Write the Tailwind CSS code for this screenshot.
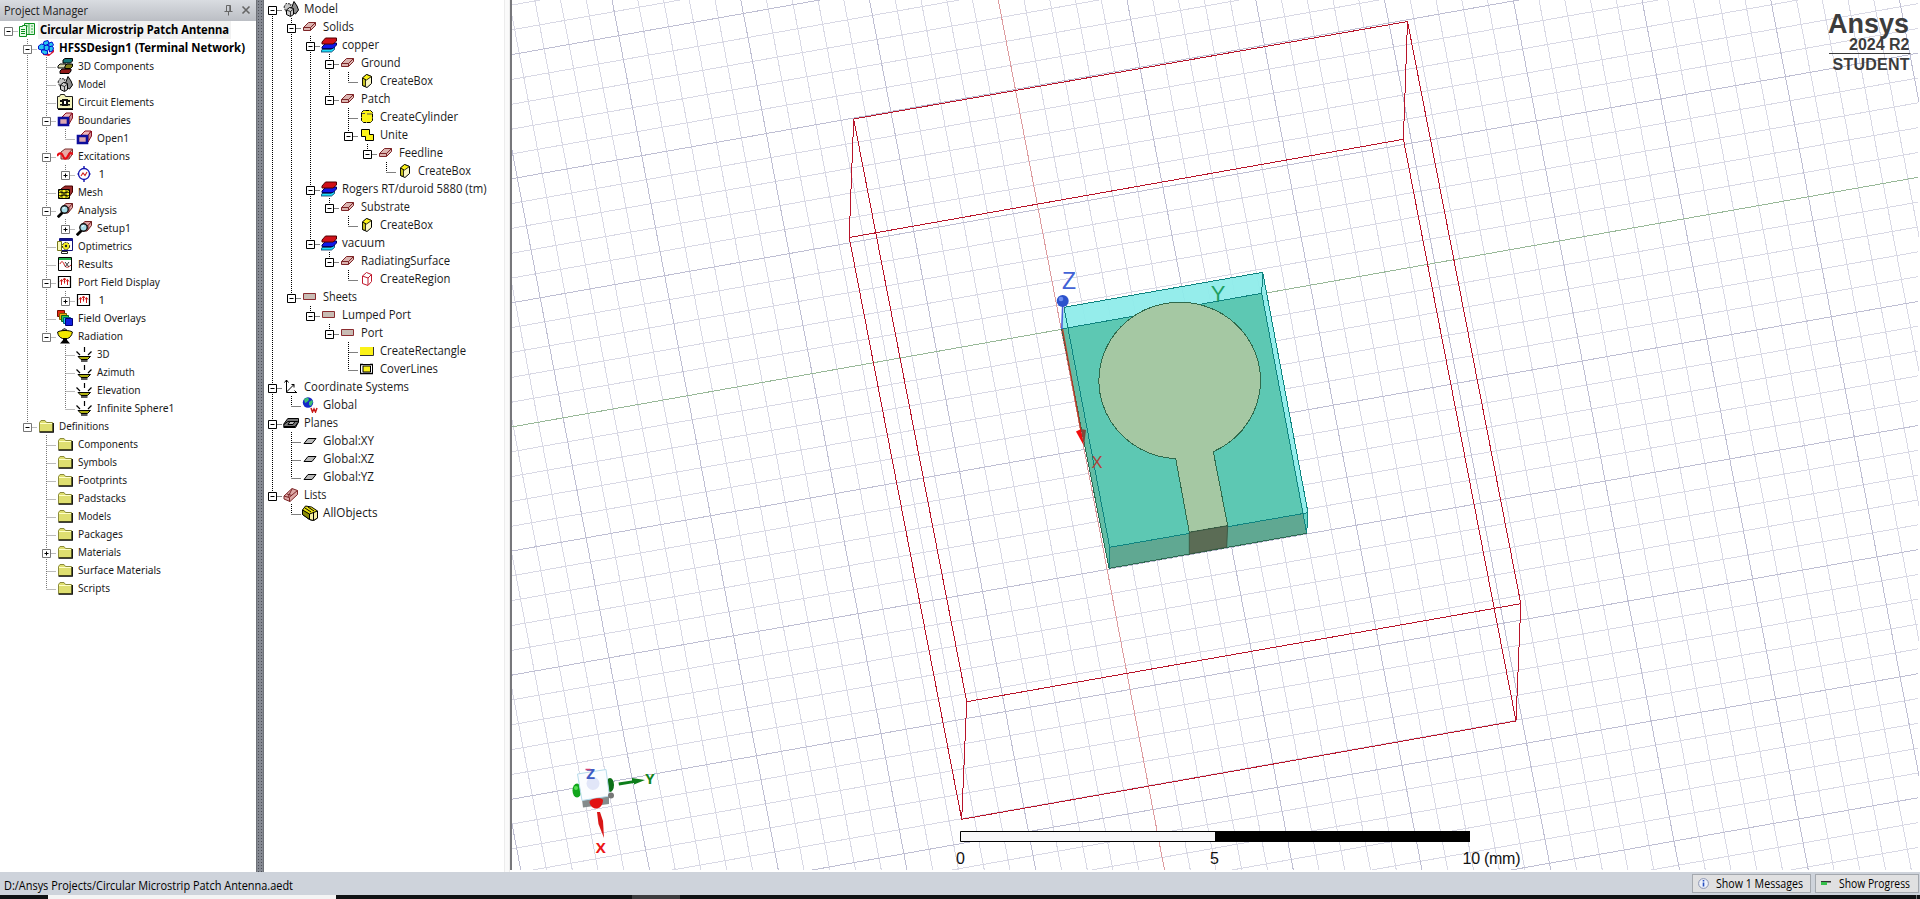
<!DOCTYPE html>
<html lang="en">
<head>
<meta charset="utf-8">
<title>Circular Microstrip Patch Antenna</title>
<script src="https://cdn.jsdelivr.net/npm/@tailwindcss/browser@4"></script>
</head>
<body class="w-[1920px] h-[899px] overflow-hidden bg-[#ced3db] text-black flex flex-col font-['Open_Sans','Noto_Sans',sans-serif]">

<!-- icon library, 16x16 each -->
<svg class="hidden" xmlns="http://www.w3.org/2000/svg">
  <symbol id="project" viewBox="0 0 16 16"><path d="M5.500 1.500h10v11h-10z" fill="#dff5df" stroke="#0a8f1e"/><path d="M10 2v10M7 4h2M12 4h2M12 7h2M12 10h2" stroke="#35b545" /><path d="M.5 4.500h3v-1h4v11h-7z" fill="#e8fbe8" stroke="#0a8f1e"/><path d="M2 7.500h4M2 9.500h4M2 11.500h4" stroke="#0a8f1e"/></symbol>
  <symbol id="hfss" viewBox="0 0 16 16"><path d="M5 13l7 1 4-5v3l-5 4-6-1z" fill="#d01030"/><g fill="#28c8f0" stroke="#0010d0"><path d="M6 1.500l4-1 1 3-3 2-3-1z"/><path d="M11 3l3-1 1.500 3-2 2-3-1z"/><path d="M.5 6l3-2 3 1v4l-3 1-3-1z"/><path d="M6 6l3-1 2.500 2-1 3-4 1z"/><path d="M11 7l3-1 1.500 2-1 3-3 1z"/><path d="M3.500 10l3 0 3 1v3l-3 .5-3-2z"/></g></symbol>
  <symbol id="comp3d" viewBox="0 0 16 16"><path d="M6 2l2-1.500h7.500V3l-2 2H6z" fill="#177878" stroke="#000"/><path d="M1 8l2-2h6l-1 4H1z" fill="#d8d8b0" stroke="#000"/><path d="M8 8l2-2h5.500v2.500l-2 2H8z" fill="#80801a" stroke="#000"/><path d="M3 13l2-2h9v2l-2 2.500H3z" fill="#901818" stroke="#000"/></symbol>
  <symbol id="model" viewBox="0 0 16 16"><path d="M1 6l2-3.500 5 .5-1 6-4 2z" fill="#c6c6c6" stroke="#222" stroke-dasharray="2 1"/><path d="M8.500 7L11 .5 14 5l1.500 4-3 4-3-2z" fill="#8c8c8c" stroke="#000"/><path d="M3.500 9l3-2.500 4 1v6l-3 2-4-2z" fill="#cdcdcd" stroke="#000"/><path d="M3.500 9l4 1.500 3-2.500M7.500 10v5" fill="none" stroke="#333"/></symbol>
  <symbol id="circuit" viewBox="0 0 16 16"><path d="M.5 14.500v-12h2l1-2h4l1 2h7v12z" fill="#f5f5bd" stroke="#222"/><path d="M1 15.500h15V3" fill="none" stroke="#000"/><path d="M5 5h6v7H5zM3 6h2v2H3zM3 10h2v1.500H3zM11 6h2v2h-2zM11 10h2v1.500h-2z" fill="#111"/><path d="M7 7h2v3H7z" fill="#fff"/></symbol>
  <symbol id="bound" viewBox="0 0 16 16"><path d="M5 5l4-4h6l-3 5z" fill="#efb6b8" stroke="#8a1020"/><path d="M12 12l3.500-6V1L12 5z" fill="#c98a90" stroke="#8a1020"/><path d="M2 6h9v7H2z" fill="#dca7b0" stroke="#0d0d9c" stroke-width="2.600"/></symbol>
  <symbol id="excite" viewBox="0 0 16 16"><path d="M4 4l4-3h7.500v5L12 11H4z" fill="#e7aaa6" stroke="#7a3030"/><path d="M12 10V5l3.500-4" fill="none" stroke="#7a3030"/><path d="M0 8c2-4 5-3 6 0s3 4 5 0 3-3 5-2" fill="none" stroke="#e80c14" stroke-width="2.200"/></symbol>
  <symbol id="port" viewBox="0 0 16 16"><circle cx="8" cy="8" r="5.500" fill="#fff" stroke="#1111b0" stroke-width="1.300"/><path d="M8 0v2.500M8 13.500V16M1.500 8h1M13.500 8h1" stroke="#1111b0" stroke-width="1.400"/><path d="M5 10l2-3 2 2.500 2-3.500" fill="none" stroke="#d02020" stroke-width="1.100"/></symbol>
  <symbol id="mesh" viewBox="0 0 16 16"><path d="M4 5l4-3h7.500v6L12 13z" fill="#9a2a2a" stroke="#400"/><path d="M1.500 5.500h11v9h-11z" fill="#f5ef20" stroke="#000"/><path d="M5 5v10M9 5v10M1 8.500h12M1 11.500h12M2 6l10 8M12 6L2 14" stroke="#000" stroke-width=".7"/></symbol>
  <symbol id="analysis" viewBox="0 0 16 16"><path d="M5 5l4-3.500h6.500v4L11 11H5z" fill="#dda3a3" stroke="#702020"/><path d="M10.500 5.500h1.500l3.500-4M12 5.500v4" fill="none" stroke="#702020"/><path d="M5.500 10.500L.8 15.200" stroke="#000" stroke-width="2.800"/><circle cx="7.500" cy="7.500" r="3.700" fill="#a8dde9" stroke="#111" stroke-width="1.400"/><path d="M6 6.500l2-1" stroke="#fff"/></symbol>
  <symbol id="opti" viewBox="0 0 16 16"><path d="M2.500.5h13v12h-13z" fill="#fff" stroke="#101078"/><path d="M2 1h14v2H2z" fill="#101090"/><path d="M.5 3.500h4v9h-4z" fill="#fafabc" stroke="#77771a"/><path d="M4.500 13.500h6v2h-6z" fill="#fff" stroke="#222"/><circle cx="9" cy="8" r="3.600" fill="#f8ee20" stroke="#222" stroke-dasharray="2 1"/><circle cx="9" cy="8" r="1.200" fill="#222"/></symbol>
  <symbol id="results" viewBox="0 0 16 16"><path d="M1.500 1.500h13v13h-13z" fill="#fff" stroke="#000"/><path d="M2 2h12v2H2z" fill="#23b14d"/><path d="M3 8c1-3 3-3 4 0s3 5 7 1" fill="none" stroke="#d02020"/><path d="M8 6l4 5M12 6l-4 5" stroke="#222" stroke-width=".9"/></symbol>
  <symbol id="pfd" viewBox="0 0 16 16"><path d="M1.500 2.500h12v11h-12z" fill="#fff" stroke="#000" stroke-width="1.200"/><path d="M4.500 6v5M7.500 4.500v5M10.500 6v5M3 7.500l1.500-2 1.500 2M6 6l1.500-2L9 6M9 7.500l1.500-2 1.500 2" fill="none" stroke="#d01818"/></symbol>
  <symbol id="overlays" viewBox="0 0 16 16"><path d="M.5.500h7v6h-7z" fill="#e82a10" stroke="#701000"/><path d="M2.500 3.500h7v6h-7z" fill="#f0b010" stroke="#806000"/><path d="M4.500 5.500h7v6h-7z" fill="#30d040" stroke="#106020"/><path d="M6.500 7.500h7v6h-7z" fill="#20d0e8" stroke="#006080"/><path d="M8.500 8.500h7v7h-7z" fill="#1020e0" stroke="#000070"/></symbol>
  <symbol id="radiation" viewBox="0 0 16 16"><path d="M5 2l2.500-1.500L10 2v1H5z" fill="#888" stroke="#000" stroke-width=".7"/><path d="M.6 4c3-2 12-2 14.800 0-.5 4-3 6-5 6.500H5.500C3 9.500 1 8 .6 4z" fill="#f3e800" stroke="#000"/><path d="M6 10h4v2l3 3.500H3L6 12z" fill="#000"/></symbol>
  <symbol id="pattern" viewBox="0 0 16 16"><path d="M8.500 1v5M.5 5.500L4 9M15.500 5.500L12 9" stroke="#000" stroke-width="1.200"/><path d="M2 10.500h12.500l-3 3H5z" fill="#b0b010" stroke="#000"/><path d="M5 15h6.500" stroke="#000" stroke-width="1.300"/></symbol>
  <symbol id="folder" viewBox="0 0 16 16"><path d="M1.500 13.500V4.500l1.500-2h4l1.500 2h6v9z" fill="#dfdf70" stroke="#8c8c3a"/><path d="M2 5.500h12" stroke="#ffffc8"/><path d="M1.500 14.200h13.800V5" fill="none" stroke="#000" stroke-width="1.200"/></symbol>
  <symbol id="solid" viewBox="0 0 16 16"><path d="M1.500 8.500l5-5h7v3l-5 5h-7z" fill="#dcb4b0" stroke="#7c2426"/><path d="M1.500 8.500h7l5-5M8.500 8.500v3" fill="none" stroke="#7c2426"/></symbol>
  <symbol id="material" viewBox="0 0 16 16"><path d="M1 12.500h9l3.500-2.500v2.500l-3 2.500H0z" fill="#20e0f8" stroke="#003060" stroke-width=".8"/><path d="M1 10l4-4h10.500v2L12 11.500H1z" fill="#1018e8" stroke="#000060"/><path d="M1 5l3.500-4h11v3L12 7H1z" fill="#d01018" stroke="#500000"/></symbol>
  <symbol id="box" viewBox="0 0 16 16"><path d="M3.500 5l4-3.500 5 2v7l-4.500 4-4.500-2z" fill="#fbf8c4" stroke="#000"/><path d="M3.500 5l3 1.500v7l-3-1z" fill="#c8c420" stroke="#000" stroke-width=".8"/><path d="M3.500 5l4-3.500 5 2L7.500 7z" fill="#fbf218" stroke="#000" stroke-width=".8"/></symbol>
  <symbol id="cyl" viewBox="0 0 16 16"><path d="M2.500 3.500l2-2h7l2 2v8l-2 2h-7l-2-2z" fill="#fbf218" stroke="#000" stroke-dasharray="4 .6"/><path d="M3 4.500h3M8 5h5" stroke="#555"/></symbol>
  <symbol id="unite" viewBox="0 0 16 16"><path d="M2.500 2.500h8v5h4v6h-8v-4h-4z" fill="#fbf218" stroke="#000"/></symbol>
  <symbol id="region" viewBox="0 0 16 16"><path d="M3.500 5l4-3.500 5 2v7l-3.500 4-5.500-2zM3.500 5L9 7l3.500-3.500M9 7v7" fill="none" stroke="#c0182c" /></symbol>
  <symbol id="sheet" viewBox="0 0 16 16"><path d="M1.500 4.500h12v6h-12z" fill="#c8bcb4" stroke="#8a2c30"/></symbol>
  <symbol id="rect" viewBox="0 0 16 16"><path d="M1 4h13v8H1z" fill="#fbf218"/><path d="M1 12.500h13.500V4" fill="none" stroke="#333"/></symbol>
  <symbol id="cover" viewBox="0 0 16 16"><path d="M1.500 3.500h12v9h-12z" fill="#fff" stroke="#000"/><path d="M4 5h7.500v6H4z" fill="#fbf218" stroke="#000"/><path d="M1 3.500h3M11 3.500h3M1 12.500h13" stroke="#000" stroke-width="1.500"/></symbol>
  <symbol id="coord" viewBox="0 0 16 16"><path d="M3.500 1v12.500H14M3.500 13L11 5.500M1.500 3.500l2-2.500 2 2.500M11.500 11.500l2 2M8.500 5.500h2.500v3" fill="none" stroke="#000"/></symbol>
  <symbol id="globe" viewBox="0 0 16 16"><circle cx="6" cy="5.500" r="5.200" fill="#1428c8"/><path d="M2 2l4-1.500L7 3 5 5 3 6zM7 5l3-2 1 2-2 4-2-1z" fill="#38c070"/><path d="M9 11l1.500 4 1.500-3 1.500 3 1.500-4" fill="none" stroke="#c81818" stroke-width="1.500"/></symbol>
  <symbol id="planes" viewBox="0 0 16 16"><path d="M.8 12.500V9l4-5.500h10.700V7l-3 5.500z" fill="#777" stroke="#000"/><path d="M.8 9.500l4-3h10M1 11.500h11l3-4" fill="none" stroke="#000"/><path d="M5 9.500l2-3h5l-2 3z" fill="#bbb" stroke="#000"/></symbol>
  <symbol id="plane" viewBox="0 0 16 16"><path d="M2 10.500l4-5h8l-4 5z" fill="#bbb" stroke="#000"/></symbol>
  <symbol id="lists" viewBox="0 0 16 16"><path d="M1 9l8-7.500 5.500 2v4L7 14.500 1 12z" fill="#dda8a6" stroke="#7c2426"/><path d="M1 9l5 1.500L14.500 3.500M6.500 10.500v4M4 7l5 1.500M9 2l-4 8" fill="none" stroke="#7c2426"/></symbol>
  <symbol id="all" viewBox="0 0 16 16"><path d="M.5 5l3-4 6 1 6 4v7l-4 2.500-4-1-7-5z" fill="#e8e010" stroke="#000"/><path d="M.5 5l7 4v5.500l-7-5z" fill="#8c8c08" stroke="#000"/><path d="M7.500 9l8-3v7l-4 2.500-4-1z" fill="#f6f0a0" stroke="#000"/><path d="M3 3l6 4M6 2l6 4M11.500 8v7" stroke="#000"/></symbol>
</svg>

<main class="flex h-[872px] w-full shrink-0">
  <!-- Project Manager -->
  <section class="flex w-[256px] shrink-0 flex-col bg-white">
    <header class="flex h-[21px] shrink-0 items-center bg-gradient-to-b from-[#d9dce1] to-[#bbbec4] pl-[4px] pr-[5px] pb-[2px]">
      <div class="grow"><svg class="h-[18px] w-[90px] overflow-visible text-[12px]" fill="#222"><text x="0" y="13.500" textLength="84" lengthAdjust="spacingAndGlyphs">Project Manager</text></svg></div>
      <svg class="mr-[8px] h-[12px] w-[9px]" viewBox="0 0 9 12" fill="none" stroke="#666"><path d="M2.500 7V1.500h4V7M5.800 1.500V7M.5 7.500h8M4.500 8v3.500"/></svg>
      <svg class="h-[10px] w-[10px]" viewBox="0 0 10 10" stroke="#666" stroke-width="1.600"><path d="M1.500 1.500l7 7M8.500 1.500l-7 7"/></svg>
    </header>
    <div id="projectTree" class="flex flex-col font-['Noto_Sans',sans-serif] text-[11.500px]"></div>
  </section>

  <div class="w-[8px] shrink-0 border-x border-[#6f7278] bg-[#858992] bg-[radial-gradient(#4d5058_0.8px,transparent_1px)] bg-[length:3px_3px]"></div>

  <!-- Model history -->
  <section class="flex w-[246px] shrink-0 bg-white">
    <div id="modelTree" class="flex w-[240px] flex-col text-[12px]"></div>
    <div class="ml-auto w-[6px] border-x border-[#ececec] bg-[#fafafa]"></div>
  </section>

  <!-- 3D view -->
  <section class="flex w-[1410px] shrink-0 flex-col bg-white">
    <svg class="h-[870px] w-[1409px] border-l-2 border-[#77777b]" viewBox="512 0 1407 870" preserveAspectRatio="none">
      <g id="grid" fill="none" stroke-width="1" shape-rendering="crispEdges"></g>
      <g shape-rendering="crispEdges">
        <path d="M512 426.900L1918 177.300" stroke="#98b898" />
        <path d="M998.300 0L1164.500 870" stroke="#dd9ca0"/>
      </g>

      <g fill="none" stroke="#b8142a" stroke-width="1" shape-rendering="crispEdges">
        <path d="M853.700 119L1407.500 21.500L1520.800 603.700L966.700 701.700Z"/>
        <path d="M849.200 237.500L1403.400 139.300L1516 721L961.700 819.300Z"/>
        <path d="M853.700 119L849.200 237.500M1407.500 21.500L1403.400 139.300M1520.800 603.700L1516 721M966.700 701.700L961.700 819.300"/>
      </g>

      <!-- substrate -->
      <path d="M1064 307.300L1262.700 272.300L1308 512.700L1306.700 533.300L1109 568.300L1061.700 329Z" fill="#8eecea" fill-opacity=".94"/>
      <path d="M1061.700 329L1261.700 293.300L1303.500 513.500L1109.700 547.300L1109 568.300Z" fill="#5dc8b3"/>
      <path d="M1061.700 329L1066.500 328.200L1109.700 547.300L1109 568.300Z" fill="#62bda5"/>
      <path d="M1109.700 547.300L1303.500 513.500L1306.700 533.300L1109 568.300Z" fill="#60a892"/>
      <path d="M1303.500 513.500L1308 512.700L1306.700 533.300Z" fill="#68d2c4"/>
      <g fill="none" stroke="#0f8480" stroke-width="1" shape-rendering="crispEdges">
        <path d="M1064 307.300L1262.700 272.300L1308 512.700L1109.700 547.300Z"/>
        <path d="M1061.700 329L1261.700 293.300L1306.700 533.300M1262.700 272.300L1261.700 293.300M1308 512.700L1306.700 533.300M1109.700 547.300L1109 568.300"/>
      </g>
      <path d="M1061.700 329L1109 568.300L1306.700 533.300" fill="none" stroke="#2d6a52" shape-rendering="crispEdges"/>
      <path d="M1175.700 458.700A80.800 78.300 0 1 1 1213.300 451.700L1227.700 525.700L1189.300 532.300Z" fill="#a5c8a3" stroke="#2f6a4c" shape-rendering="crispEdges"/>
      <path d="M1189.300 532.300L1227.700 525.700L1226.700 547.200L1189.300 554Z" fill="#5b6c55" stroke="#35523c" stroke-width=".8"/>

      <!-- axes -->
      <path d="M1062.500 329L1081 431" stroke="#b83a22" stroke-width="1.300"/>
      <path d="M1076 431.500L1081 429L1084 446Z" fill="#f20c0c"/><path d="M1081 429L1086 430L1084 446Z" fill="#7c4a3c"/>
      <path d="M1062.700 305L1061.800 329" stroke="#4a62d8" stroke-width="1.600"/>
      <circle cx="1062.700" cy="301" r="6" fill="#2c52cc"/><circle cx="1061" cy="299" r="2.300" fill="#6d8cee"/>
      <g font-family="Liberation Sans, sans-serif">
        <text x="1062" y="289" font-size="23" fill="#4263d6">Z</text>
        <text x="1210.700" y="301" font-size="22" fill="#1f9f62">Y</text>
        <text x="1091.500" y="468" font-size="16.500" fill="#b04038">X</text>
      </g>

      <!-- orientation triad -->
      <g>
        <ellipse cx="577" cy="790.500" rx="4.500" ry="7" fill="#12a61c"/><circle cx="576" cy="788" r="2" fill="#55e055"/>
        <ellipse cx="610" cy="785" rx="4" ry="7" fill="#0c7018"/>
        <path d="M582 799.500L609 796V804L583 807.500Z" fill="#858c8c"/>
        <path d="M577.500 774L606 769.500L609.500 796L582 800.500Z" fill="#fbfdff" stroke="#b7dcec"/>
        <circle cx="593" cy="783.500" r="6.500" fill="#e1e6f8"/>
        <circle cx="611" cy="795.500" r="3" fill="#777"/>
        <path d="M589.500 802C590 798 602 797 603 800C603 806 599 808.500 596 808.500C593 808.500 590 806 589.500 802Z" fill="#e21212"/>
        <path d="M618.500 782.500L632 780.500V778L645 780L634 784.500V783L619 785.500Z" fill="#0d7e1a"/>
        <path d="M597 812L600 812L603 821L604 838L598.500 824Z" fill="#d91616"/>
        <g font-family="Open Sans, sans-serif" font-weight="700" text-anchor="middle">
          <text x="590.500" y="779" font-size="15" fill="#405bc4">Z</text>
          <text x="650" y="784" font-size="15" fill="#11841c">Y</text>
          <text x="600.700" y="853" font-size="15" fill="#ec1616">X</text>
        </g>
        <path d="M585.500 769.500h5" stroke="#d04070" stroke-width="1.500"/>
      </g>

      <!-- scale -->
      <path d="M960.500 831.500h255v10h-255z" fill="#f7f7f9" stroke="#000"/>
      <path d="M1215 831h255v11h-255z" fill="#000"/>
      <g font-family="Liberation Sans, sans-serif" font-size="16" fill="#111">
        <text x="956" y="863.500">0</text><text x="1210" y="863.500">5</text><text x="1462.500" y="863.500" textLength="58">10 (mm)</text>
      </g>

      <!-- product mark -->
      <g font-family="Liberation Sans, sans-serif" font-weight="700" fill="#3c3c3c" text-anchor="end">
        <text x="1909" y="32.700" font-size="27">Ansys</text>
        <text x="1909.500" y="50" font-size="16">2024 R2</text>
        <text x="1909.500" y="69.700" font-size="16" textLength="77">STUDENT</text>
        <path d="M1829 53.500h81.500" stroke="#3c3c3c" stroke-width="1.200"/>
      </g>
    </svg>
  </section>
</main>

<!-- status bar -->
<footer class="flex h-[23px] shrink-0 items-center gap-[4px] bg-[#ced3db] pl-[4px] pr-[1px] text-[12px]">
  <div class="grow pt-[2px]"><svg class="h-[18px] w-[300px] overflow-visible"><text x="0" y="13.500" textLength="289" lengthAdjust="spacingAndGlyphs">D:/Ansys Projects/Circular Microstrip Patch Antenna.aedt</text></svg></div>
  <button class="flex h-[19px] w-[119px] items-center border border-[#a4a8ae] bg-[#e0e0e1] pl-[5px]">
    <svg class="mr-[7px] h-[11px] w-[11px]" viewBox="0 0 11 11"><circle cx="5.500" cy="5.500" r="4.900" fill="#eef2fc" stroke="#8a93b0"/><path d="M5.500 2v1.500M5.500 4.500v4" stroke="#2850c0" stroke-width="1.600"/></svg>
    <svg class="h-[17px] w-[90px] overflow-visible"><text x="0" y="13" textLength="87" lengthAdjust="spacingAndGlyphs">Show 1 Messages</text></svg>
  </button>
  <button class="flex h-[19px] w-[104px] items-center border border-[#a4a8ae] bg-[#e0e0e1] pl-[5px]">
    <svg class="mr-[8px] h-[8px] w-[10px]" viewBox="0 0 10 8"><path d="M0 1h10v1.500H0z" fill="#333"/><path d="M0 2h6v3H0z" fill="#35c04a"/></svg>
    <svg class="h-[17px] w-[74px] overflow-visible"><text x="0" y="13" textLength="71" lengthAdjust="spacingAndGlyphs">Show Progress</text></svg>
  </button>
</footer>
<div class="flex h-[4px] shrink-0 bg-[#101214]">
  <div class="ml-[48px] h-full w-[288px] bg-[#f4f4f4]"></div>
  <div class="ml-[296px] h-full w-[48px] bg-[#3c3c3e]"></div>
  <div class="ml-auto mr-[3px] h-full w-px bg-[#777]"></div>
</div>

<script>
// [level, expander ('-', '+', ''), icon, label, label width]
const project = [
  [0,'-','project','Circular Microstrip Patch Antenna',189],[1,'-','hfss','HFSSDesign1 (Terminal Network)',186],
  [2,'','comp3d','3D Components',76],[2,'','model','Model',27.7],[2,'','circuit','Circuit Elements',76],
  [2,'-','bound','Boundaries',52.7],[3,'','bound','Open1',32],[2,'-','excite','Excitations',52],[3,'+','port','1',0],
  [2,'','mesh','Mesh',25],[2,'-','analysis','Analysis',39],[3,'+','analysis','Setup1',34],[2,'','opti','Optimetrics',54],
  [2,'','results','Results',35],[2,'-','pfd','Port Field Display',82],[3,'+','pfd','1',0],[2,'','overlays','Field Overlays',68],
  [2,'-','radiation','Radiation',45],[3,'','pattern','3D',12.5],[3,'','pattern','Azimuth',37.7],[3,'','pattern','Elevation',43.7],
  [3,'','pattern','Infinite Sphere1',77.5],[1,'-','folder','Definitions',50],[2,'','folder','Components',60],
  [2,'','folder','Symbols',39],[2,'','folder','Footprints',49],[2,'','folder','Padstacks',48],[2,'','folder','Models',33],
  [2,'','folder','Packages',45],[2,'+','folder','Materials',43],[2,'','folder','Surface Materials',83],[2,'','folder','Scripts',32]];
const model = [
  [0,'-','model','Model',34],[1,'-','solid','Solids',31],[2,'-','material','copper',37],[3,'-','solid','Ground',39.5],
  [4,'','box','CreateBox',53],[3,'-','solid','Patch',29.5],[4,'','cyl','CreateCylinder',78],[4,'-','unite','Unite',28],
  [5,'-','solid','Feedline',44],[6,'','box','CreateBox',53],[2,'-','material','Rogers RT/duroid 5880 (tm)',144.5],
  [3,'-','solid','Substrate',49],[4,'','box','CreateBox',53],[2,'-','material','vacuum',43],[3,'-','solid','RadiatingSurface',89],
  [4,'','region','CreateRegion',70.5],[1,'-','sheet','Sheets',34],[2,'-','sheet','Lumped Port',69],[3,'-','sheet','Port',22],
  [4,'','rect','CreateRectangle',86],[4,'','cover','CoverLines',58],[0,'-','coord','Coordinate Systems',105],
  [1,'','globe','Global',34],[0,'-','planes','Planes',34],[1,'','plane','Global:XY',51],[1,'','plane','Global:XZ',51],
  [1,'','plane','Global:YZ',51],[0,'-','lists','Lists',22.5],[1,'','all','AllObjects',54.5]];

// true when a later row continues the guide line at this level
const continues = (rows, i, level) => {
  for (let j = i + 1; j < rows.length; j++) {
    if (rows[j][0] < level) return false;
    if (rows[j][0] === level) return true;
  }
  return false;
};
function buildTree(id, rows, color) {
  document.getElementById(id).innerHTML = rows.map(([lv, ex, icon, label, w], i) => {
    let d = '';
    for (let l = 0; l <= lv; l++) {
      const x = 8.5 + 19 * l, more = continues(rows, i, l);
      if (l < lv) { if (more) d += `M${x} 0V18`; }
      else d += (i > 0 ? `M${x} 0V10` : '') + (more ? `M${x} 10V18` : '') + `M${x} 10.5H${x + 10}`;
    }
    const x = 4.5 + 19 * lv;
    const box = ex ? `<path d="M${x} 6.5h8v8h-8z" fill="#fff" stroke="${color}"/><path d="M${x + 2} 10.5h4${ex === '+' ? `M${x + 4} 8.5v4` : ''}" stroke="#000"/>` : '';
    const bold = id === 'projectTree' && i < 2;
    const W = 19 * (lv + 1);
    const fit = w ? `textLength="${w}" lengthAdjust="spacingAndGlyphs"` : '';
    return `<div class="flex h-[18px] shrink-0 items-center">
      <svg class="h-[18px] shrink-0" style="width:${W}px" viewBox="0 0 ${W} 18"><path d="${d}" fill="none" stroke="${color}" stroke-dasharray="1 1"/>${box}</svg>
      <svg class="h-[16px] w-[16px] shrink-0"><use href="#${icon}"/></svg>
      <svg class="${bold ? 'ml-[3px] h-[18px] shrink-0 overflow-visible font-bold text-[12px]' : 'ml-[3px] h-[18px] shrink-0 overflow-visible'} ${i === 0 && bold ? 'bg-[#f1f1f1]' : ''}" style="width:${(w || 10) + 4}px" fill="${bold ? '#000' : '#1a1a1a'}"><text x="${w ? 2 : 3.5}" y="13" ${fit}>${label}</text></svg>
    </div>`;
  }).join('');
}
buildTree('projectTree', project, '#777');
buildTree('modelTree', model, '#000');

// ground-plane grid: five minor cells to each major cell
let minor = '', major = '';
for (let i = -20; i <= 27; i++) {
  if (i === 0) continue;
  const o = i * 24.82, s = `M512 ${(426.9 + o).toFixed(1)}L1918 ${(177.3 + o).toFixed(1)}`;
  if (i % 5) minor += s; else major += s;
}
for (let k = -26; k <= 35; k++) {
  if (k === 0) continue;
  const o = k * 25.75, s = `M${(998.3 + o).toFixed(1)} 0L${(1164.5 + o).toFixed(1)} 870`;
  if (k % 5) minor += s; else major += s;
}
document.getElementById('grid').innerHTML = `<path d="${minor}" stroke="#d9d9e5"/><path d="${major}" stroke="#bfbfd3"/>`;
</script>
</body>
</html>
